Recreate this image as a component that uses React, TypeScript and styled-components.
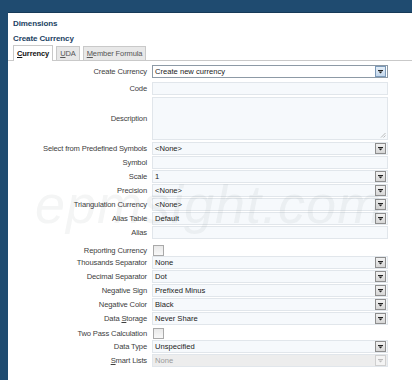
import { createGlobalStyle, styled } from 'styled-components';

const GlobalStyle = createGlobalStyle`
  html, body {
    margin: 0;
    padding: 0;
    background: #1f4b70;
    font-family: 'Liberation Sans', Arial, sans-serif;
  }
`;

type Row = {
  label: React.ReactNode;
  kind: 'select' | 'text' | 'area' | 'check';
  value?: string;
  focus?: boolean;
  disabled?: boolean;
  top?: number;
};

const rows: Row[] = [
  { label: 'Create Currency', kind: 'select', value: 'Create new currency', focus: true },
  { label: 'Code', kind: 'text', top: 4 },
  { label: 'Description', kind: 'area', top: 2 },
  { label: 'Select from Predefined Symbols', kind: 'select', value: '<None>', top: 2 },
  { label: 'Symbol', kind: 'text' },
  { label: 'Scale', kind: 'select', value: '1' },
  { label: 'Precision', kind: 'select', value: '<None>' },
  { label: 'Triangulation Currency', kind: 'select', value: '<None>' },
  { label: 'Alias Table', kind: 'select', value: 'Default' },
  { label: 'Alias', kind: 'text' },
  { label: 'Reporting Currency', kind: 'check', top: 5 },
  { label: 'Thousands Separator', kind: 'select', value: 'None', top: -1 },
  { label: 'Decimal Separator', kind: 'select', value: 'Dot' },
  { label: 'Negative Sign', kind: 'select', value: 'Prefixed Minus' },
  { label: 'Negative Color', kind: 'select', value: 'Black' },
  { label: <>Data <u>S</u>torage</>, kind: 'select', value: 'Never Share' },
  { label: 'Two Pass Calculation', kind: 'check', top: 2 },
  { label: 'Data Type', kind: 'select', value: 'Unspecified', top: 0 },
  { label: <><u>S</u>mart Lists</>, kind: 'select', value: 'None', disabled: true },
];

function Arrow({ disabled }: { disabled?: boolean }) {
  const c = disabled ? '#bbb' : '#222';
  return (
    <svg width="5" height="4" viewBox="0 0 5 4">
      <rect x="0" y="0" width="5" height="1" fill={c} />
      <path d="M0.5 1.5 H4.5 L2.5 3.5 Z" fill={c} />
    </svg>
  );
}

function Field({ row }: { row: Row }) {
  if (row.kind === 'check') return <Check />;
  if (row.kind === 'area')
    return (
      <Area>
        <Grip viewBox="0 0 6 6" width="6" height="6">
          <path d="M5.5 1 L1 5.5 M5.5 3.5 L3.5 5.5" stroke="#aaa" strokeWidth="0.8" />
        </Grip>
      </Area>
    );
  if (row.kind === 'text') return <Box />;
  return (
    <Box $focus={row.focus} $disabled={row.disabled}>
      <Value $disabled={row.disabled}>{row.value}</Value>
      <DropButton $focus={row.focus} $disabled={row.disabled}>
        <Arrow disabled={row.disabled} />
      </DropButton>
    </Box>
  );
}

export default function App() {
  return (
    <>
      <GlobalStyle />
      <Panel>
        <Title>Dimensions</Title>
        <Subtitle>Create Currency</Subtitle>
        <Tabs>
          <Tab $active>
            <u>C</u>urrency
          </Tab>
          <Tab>
            <u>U</u>DA
          </Tab>
          <Tab>
            <u>M</u>ember Formula
          </Tab>
        </Tabs>
        <Form>
          {rows.map((r, i) => (
            <FormRow key={i} $top={r.top ?? 1} $kind={r.kind}>
              <Label>{r.label}</Label>
              <Field row={r} />
            </FormRow>
          ))}
        </Form>
        <Watermark>epmsight.com</Watermark>
      </Panel>
    </>
  );
}

const Panel = styled.div`
  position: relative;
  margin: 12px 0 0 8px;
  height: 368px;
  background: #fff;
  border-top: 1px solid #163a58;
  box-sizing: border-box;
  overflow: hidden;
`;

const Title = styled.div`
  padding: 5px 0 0 5px;
  height: 11px;
  line-height: 11px;
  font-size: 8px;
  font-weight: bold;
  letter-spacing: -0.1px;
  color: #1c3f63;
`;

const Subtitle = styled(Title)`
  padding-top: 4px;
  height: 12px;
`;

const Tabs = styled.div`
  display: flex;
  align-items: flex-end;
  gap: 3px;
  padding-left: 5px;
  height: 15px;
  border-bottom: 1px solid #c9c9c9;
`;

const Tab = styled.div<{ $active?: boolean }>`
  height: ${(p) => (p.$active ? 15 : 13)}px;
  padding: 0 3px;
  display: flex;
  align-items: center;
  font-size: 7.5px;
  letter-spacing: -0.1px;
  font-weight: ${(p) => (p.$active ? 'bold' : 'normal')};
  color: ${(p) => (p.$active ? '#111' : '#555')};
  background: ${(p) => (p.$active ? '#fff' : '#e8e8e8')};
  border: 1px solid #c9c9c9;
  border-bottom: none;
  margin-bottom: ${(p) => (p.$active ? -1 : 0)}px;
`;

const Form = styled.div`
  display: flex;
  flex-direction: column;
  padding-top: 3px;
`;

const FormRow = styled.div<{ $top: number; $kind: string }>`
  display: grid;
  grid-template-columns: 139px 236px;
  column-gap: 5px;
  align-items: center;
  margin-top: ${(p) => p.$top}px;
  height: ${(p) => (p.$kind === 'area' ? 43 : 13)}px;
`;

const Label = styled.div`
  text-align: right;
  font-size: 7.6px;
  letter-spacing: -0.15px;
  color: #404040;
  white-space: nowrap;
`;

const Box = styled.div<{ $focus?: boolean; $disabled?: boolean }>`
  box-sizing: border-box;
  height: 13px;
  display: flex;
  align-items: center;
  background: ${(p) => (p.$focus ? '#fff' : p.$disabled ? '#ededed' : '#f6f9fc')};
  border: 1px solid ${(p) => (p.$focus ? '#8d9aa6' : '#e1e6eb')};
`;

const Value = styled.span<{ $disabled?: boolean }>`
  padding-left: 2px;
  flex: 1;
  font-size: 7.6px;
  color: ${(p) => (p.$disabled ? '#999' : '#1a1a1a')};
`;

const DropButton = styled.div<{ $focus?: boolean; $disabled?: boolean }>`
  width: 9px;
  height: 9px;
  margin-right: 1px;
  display: flex;
  align-items: center;
  justify-content: center;
  border: 1px solid ${(p) => (p.$focus ? '#7b99b8' : p.$disabled ? '#cfcfcf' : '#8e8e8e')};
  background: ${(p) =>
    p.$focus
      ? 'linear-gradient(#e4eef8, #c4d8ec)'
      : p.$disabled
        ? '#f4f4f4'
        : 'linear-gradient(#f2f2f2, #d6d6d6)'};
`;

const Area = styled.div`
  position: relative;
  box-sizing: border-box;
  height: 43px;
  background: #f6f9fc;
  border: 1px solid #e1e6eb;
`;

const Grip = styled.svg`
  position: absolute;
  right: 1px;
  bottom: 1px;
`;

const Check = styled.div`
  width: 9px;
  height: 9px;
  margin-left: 1px;
  border: 1px solid #a9a9a9;
  background: linear-gradient(#e9e9e9, #f8f8f8);
`;

const Watermark = styled.div`
  position: absolute;
  left: 27px;
  top: 160px;
  font-style: italic;
  font-size: 54px;
  letter-spacing: 1px;
  color: rgba(60, 70, 80, 0.055);
  pointer-events: none;
  white-space: nowrap;
`;
